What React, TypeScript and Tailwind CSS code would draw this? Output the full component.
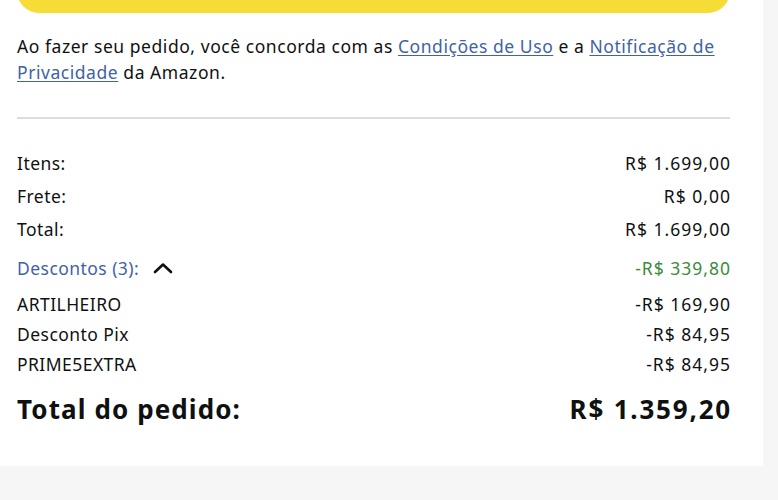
import React from "react";

const font = { fontFamily: '"Noto Sans", "Open Sans", Arial, sans-serif' };

function Row({ label, value, className = "" }: { label: string; value: string; className?: string }) {
  return (
    <div className={`flex items-center justify-between ${className}`}>
      <span>{label}</span>
      <span className="tracking-[1px] -mr-[1px]">{value}</span>
    </div>
  );
}

function ChevronUp() {
  return (
    <svg width="22" height="14" viewBox="0 0 22 14" fill="none" className="ml-[13px]">
      <path d="M3 11 L11 3.5 L19 11" stroke="#0f1111" strokeWidth="2.6" strokeLinecap="round" strokeLinejoin="round" />
    </svg>
  );
}

const link = "text-[#3f62a8] underline underline-offset-[2px]";

export default function App() {
  return (
    <div className="w-[778px] h-[500px] bg-[#f6f6f6] overflow-hidden" style={font}>
      <div className="w-[763px] h-[466px] bg-white pl-[17px] pr-[33px] text-[#0f1111]">
        {/* place-order button, scrolled mostly out of view */}
        <div className="h-[13px] relative overflow-hidden">
          <div className="absolute left-0 right-0 bottom-0 h-[60px] rounded-[22px] bg-[#f5dc36]" />
        </div>

        <p className="mt-[20px] text-[17.5px] leading-[26px] tracking-[0.55px]">
          Ao fazer seu pedido, você concorda com as <span className={link}>Condições de Uso</span> e a{" "}
          <span className={link}>Notificação de</span> <span className={link}>Privacidade</span> da Amazon.
        </p>

        <div className="mt-[32px] h-[2px] bg-[#dddddd]" />

        <div className="mt-[33px] text-[17.5px] leading-[22px] tracking-[0.45px]">
          <Row label="Itens:" value="R$ 1.699,00" />
          <Row label="Frete:" value="R$ 0,00" className="mt-[11px]" />
          <Row label="Total:" value="R$ 1.699,00" className="mt-[11px]" />
          <div className="mt-[17px] flex items-center justify-between">
            <span className="flex items-center text-[#3f62a8]">
              Descontos (3):
              <ChevronUp />
            </span>
            <span className="text-[#3d8a3a] tracking-[1px] -mr-[1px]">-R$ 339,80</span>
          </div>
          <Row label="ARTILHEIRO" value="-R$ 169,90" className="mt-[14px]" />
          <Row label="Desconto Pix" value="-R$ 84,95" className="mt-[8px]" />
          <Row label="PRIME5EXTRA" value="-R$ 84,95" className="mt-[8px]" />
        </div>

        <div className="mt-[18px] flex items-center justify-between text-[26px] leading-[32px] font-bold">
          <span className="tracking-[1.1px]">Total do pedido:</span>
          <span className="tracking-[1.8px] -mr-[2px]">R$ 1.359,20</span>
        </div>
      </div>
    </div>
  );
}
